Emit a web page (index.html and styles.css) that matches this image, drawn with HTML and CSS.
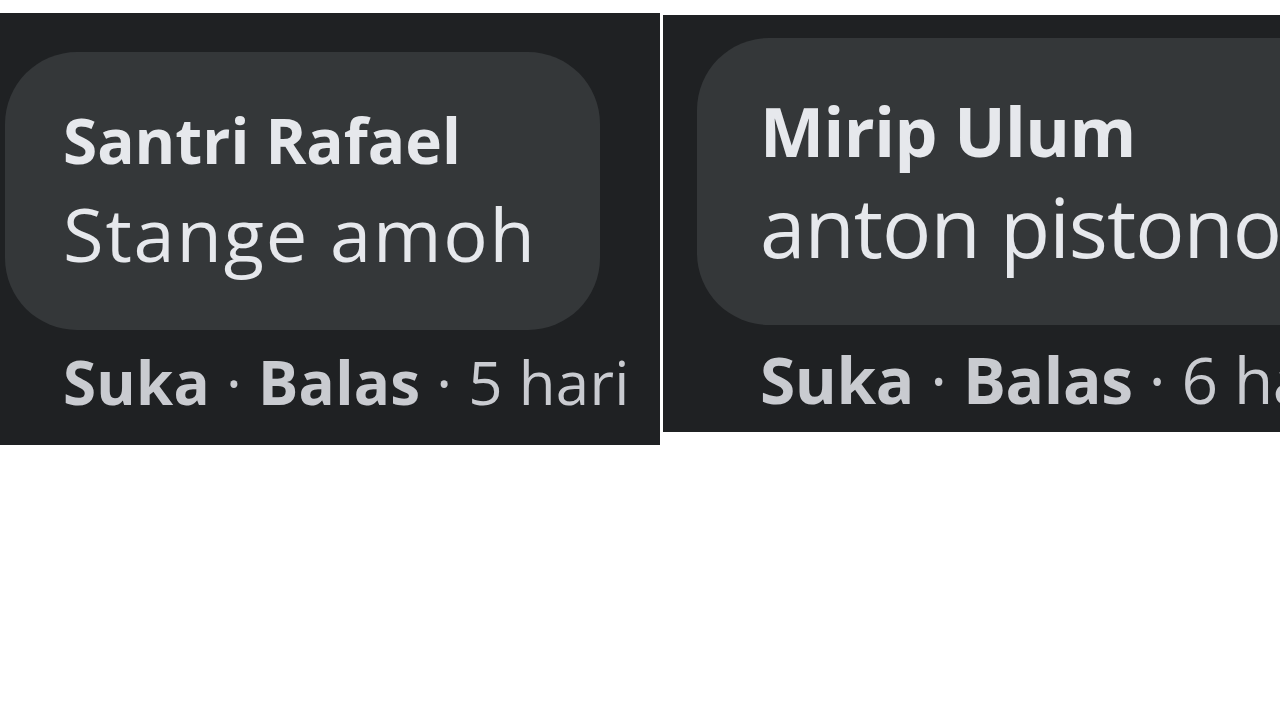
FILE: index.html
```html
<!DOCTYPE html>
<html>
<head>
<meta charset="utf-8">
<link rel="stylesheet" href="styles.css">
</head>
<body>
<div class="strip">
  <div class="panel panel-left">
    <div class="bubble bubble-left">
      <div class="name">Santri Rafael</div>
      <div class="text">Stange amoh</div>
    </div>
    <div class="meta meta-left"><b>Suka</b> · <b>Balas</b> · 5 hari</div>
  </div>
  <div class="panel panel-right">
    <div class="bubble bubble-right">
      <div class="name">Mirip Ulum</div>
      <div class="text">anton pistono</div>
    </div>
    <div class="meta meta-right"><b>Suka</b> · <b>Balas</b> · 6 hari</div>
  </div>
</div>
</body>
</html>
```
FILE: styles.css
```css
html, body {
  margin: 0;
  padding: 0;
  background: #ffffff;
  width: 1280px;
  height: 720px;
  overflow: hidden;
}
.strip {
  display: flex;
  align-items: flex-start;
  gap: 3px;
  font-family: "Open Sans", "Noto Sans", sans-serif;
}
.panel {
  background: #1f2123;
  overflow: hidden;
  box-sizing: border-box;
}
.panel-left {
  width: 660px;
  height: 432px;
  margin-top: 13px;
  padding-top: 39px;
}
.panel-right {
  flex: 1;
  height: 417px;
  margin-top: 15px;
  padding-top: 23px;
}
.bubble {
  background: #343739;
  border-radius: 72px;
  box-sizing: border-box;
}
.bubble-left {
  margin-left: 5px;
  width: 595px;
  height: 278px;
  padding: 48px 0 0 58px;
}
.bubble-right {
  margin-left: 34px;
  width: 700px;
  height: 287px;
  padding: 53px 0 0 63px;
}
.name {
  color: #e6e8ec;
  font-weight: 700;
  white-space: nowrap;
  line-height: 80px;
}
.text {
  color: #e6e8ec;
  white-space: nowrap;
}
.bubble-left .name {
  font-size: 62px;
  letter-spacing: 0;
}
.bubble-left .text {
  font-size: 74px;
  line-height: 108px;
  letter-spacing: 1.8px;
}
.bubble-right .name {
  font-size: 68px;
  letter-spacing: -0.5px;
}
.bubble-right .text {
  font-size: 82px;
  line-height: 110px;
  letter-spacing: -1px;
}
.meta {
  color: #c9cbd0;
  line-height: 80px;
  white-space: nowrap;
}
.meta b {
  font-weight: 700;
}
.meta-left {
  font-size: 60px;
  letter-spacing: 0.3px;
  padding: 12px 0 0 63px;
}
.meta-right {
  font-size: 64px;
  letter-spacing: -0.4px;
  padding: 15px 0 0 97px;
}
```
